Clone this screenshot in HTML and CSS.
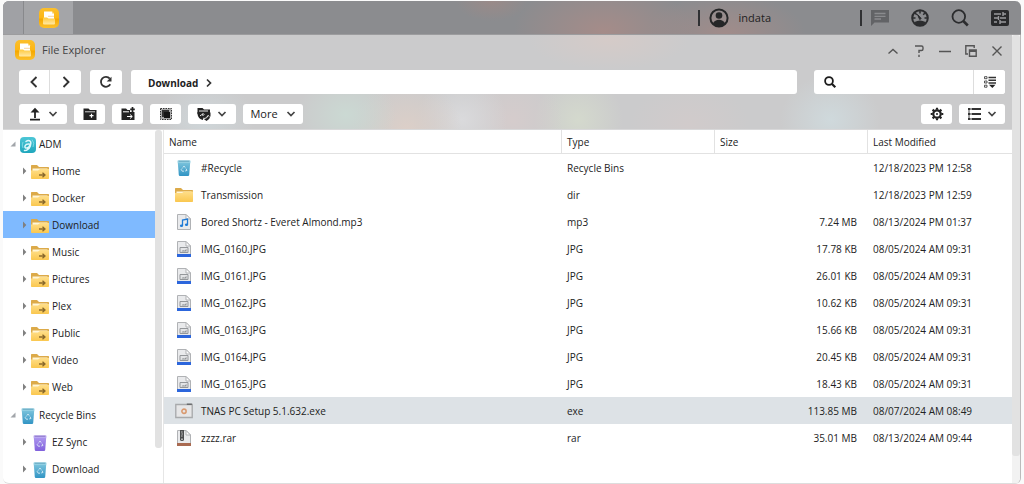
FILE: index.html
```html
<!DOCTYPE html>
<html lang="en">
<head>
<meta charset="utf-8">
<title>File Explorer</title>
<link rel="stylesheet" href="styles.css">
</head>
<body>
<svg class="sprite" aria-hidden="true">
  <defs>
    <linearGradient id="gYellow" x1="0" y1="0" x2="0" y2="1"><stop offset="0" stop-color="#fbbf2c"/><stop offset=".5" stop-color="#fdb614"/><stop offset=".55" stop-color="#f5a800"/><stop offset="1" stop-color="#fcc12e"/></linearGradient>
    <linearGradient id="gTray" x1="0" y1="0" x2="0" y2="1"><stop offset="0" stop-color="#ffc93c"/><stop offset="1" stop-color="#ffe9a6"/></linearGradient>
    <linearGradient id="gFolder" x1="0" y1="0" x2="0" y2="1"><stop offset="0" stop-color="#ffdf8a"/><stop offset="1" stop-color="#fac74f"/></linearGradient>
    <linearGradient id="gBlue" x1="0" y1="0" x2="0" y2="1"><stop offset="0" stop-color="#7fc6dd"/><stop offset="1" stop-color="#3194c4"/></linearGradient>
    <linearGradient id="gPurple" x1="0" y1="0" x2="0" y2="1"><stop offset="0" stop-color="#b09af0"/><stop offset="1" stop-color="#8060dc"/></linearGradient>
    <linearGradient id="gAdm" x1="0" y1="0" x2="0" y2="1"><stop offset="0" stop-color="#4cc6d6"/><stop offset="1" stop-color="#1fa6bc"/></linearGradient>
  </defs>
  <symbol id="app" viewBox="0 0 20 20">
    <rect width="20" height="20" rx="5" fill="url(#gYellow)"/>
    <path d="M5 3.500h8l2 2V12H5z" fill="#fff"/><path d="M13 3.500v2h2z" fill="#f8d47b"/>
    <path d="M4 9.500h4l1.500 1h6.500v5a1 1 0 0 1-1 1H5a1 1 0 0 1-1-1z" fill="url(#gTray)"/><path d="M9 8.300h6" stroke="#f3c98a" stroke-width=".8" fill="none"/>
  </symbol>
  <symbol id="share" viewBox="0 0 18 16">
    <path d="M0 1.500Q0 1 .7 1H6l2 2h9.300q.7 0 .7.700V8H0z" fill="#dcaa49"/>
    <path d="M1.500 4.500h15V8h-15z" fill="#fff6d8"/>
    <path d="M0 6.500h7l2-1.500h9v9.300q0 .7-.7.700H.7Q0 15 0 14.300z" fill="url(#gFolder)"/>
    <path d="M8 11h5.500M11.500 8.700l2.500 2.300-2.500 2.300" fill="none" stroke="#8a6a2c" stroke-width="1.300"/>
  </symbol>
  <symbol id="folder" viewBox="0 0 18 16">
    <path d="M0 1.500Q0 1 .7 1H6l2 2h9.300q.7 0 .7.700V8H0z" fill="#dcaa49"/>
    <path d="M1.500 4.500h15V8h-15z" fill="#fff6d8"/>
    <path d="M0 6h7l2-1.500h9v9.800q0 .7-.7.700H.7Q0 15 0 14.300z" fill="url(#gFolder)"/>
  </symbol>
  <symbol id="adm" viewBox="0 0 16 16">
    <rect width="16" height="16" rx="4" fill="url(#gAdm)"/>
    <path d="M6 4.500Q8.500 2.500 10.500 4.500Q11.500 6 10.300 9Q9.500 12 6.500 13.200L4.500 13.500M10 7.200Q6 6.700 5 9Q4.500 11.500 7 11Q9 10.500 10 8" fill="none" stroke="#dff8fb" stroke-width="1.500" stroke-linecap="round"/>
    <path d="M12 2.500Q15 6 13 10M3 5Q1.500 8 3 11" stroke="#8be0ea" fill="none" stroke-width=".8"/>
  </symbol>
  <symbol id="loop" viewBox="0 0 8 8">
    <path d="M2.800 2.600 4 1l1.200 1.600M6 3.600l1 1.800-1.800.6M4 6.200H2.200L1.200 4.400l1-1" fill="none" stroke="#e4f4fa" stroke-width=".8"/>
  </symbol>
  <symbol id="bin" viewBox="0 0 14 16">
    <path d="M.7 1.500h12.600L12.200 15q-.1 1-1.200 1H3q-1.100 0-1.200-1z" fill="url(#gBlue)"/>
    <path d="M.5 1Q.5.300 1.200.300h11.600q.7 0 .7.700v1.500H.5z" fill="#a9dbea"/><path d="M1.500 1.200h11" stroke="#4793af" stroke-width=".8"/>
    <use href="#loop" x="3" y="5" width="8" height="8"/>
  </symbol>
  <symbol id="binp" viewBox="0 0 14 16">
    <path d="M.7 1.500h12.600L12.200 15q-.1 1-1.200 1H3q-1.100 0-1.200-1z" fill="url(#gPurple)"/>
    <path d="M.5 1Q.5.300 1.200.300h11.600q.7 0 .7.700v1.500H.5z" fill="#c9bbf5"/><path d="M1.500 1.200h11" stroke="#7258b8" stroke-width=".8"/>
    <use href="#loop" x="3" y="5" width="8" height="8"/>
  </symbol>
  <symbol id="page" viewBox="0 0 14 16">
    <path d="M.5.500h8.500l4.500 4.500v10.500H.5z" fill="#e9eaec" stroke="#b0b2b5"/><path d="M9 .5V5h4.500z" fill="#fff" stroke="#b0b2b5"/>
  </symbol>
  <symbol id="mp3" viewBox="0 0 14 16"><use href="#page"/>
    <path d="M5.500 11.500V6l5-1v5.500" fill="none" stroke="#1e7ad6" stroke-width="1.300"/><ellipse cx="4.500" cy="11.700" rx="1.600" ry="1.300" fill="#1e7ad6"/><ellipse cx="9.500" cy="10.700" rx="1.600" ry="1.300" fill="#1e7ad6"/>
  </symbol>
  <symbol id="jpg" viewBox="0 0 14 16"><use href="#page"/>
    <path d="M3 6.500h8v5H3z" fill="#e3e4e6" stroke="#94979a"/><path d="m4.500 10.500 1.500-1.500 1.200.7L9.500 8v2.500z" fill="#94979a"/>
    <path d="M0 13h14v3H0z" fill="#2c66dc"/>
  </symbol>
  <symbol id="rar" viewBox="0 0 14 16"><use href="#page"/>
    <path d="M3 0h4v9.500q0 1.500-2 1.500t-2-1.500z" fill="#4b4c4e"/><path d="M5 1v6M4 2h1M5 4h1M4 6h1" stroke="#aaa" stroke-width=".8"/><path d="M4.300 8.500h1.400v1.500H4.300z" fill="#ddd"/>
    <path d="M0 13h14v3H0z" fill="#a96a51"/>
  </symbol>
  <symbol id="exe" viewBox="0 0 16 14">
    <path d="M.7 1.200h14.600v11.600H.7z" fill="#e6e6e7" stroke="#a8aaac" stroke-width="1.200"/><path d="M10.500 1H15" stroke="#6a6c6e" stroke-width="1.200"/>
    <circle cx="8" cy="7.200" r="1.900" fill="none" stroke="#d99a70" stroke-width="1.400"/>
  </symbol>
  <symbol id="down" viewBox="0 0 10 8"><path d="m1.500 2 3.500 3.500L8.500 2" fill="none" stroke="#444" stroke-width="1.700"/></symbol>
  <symbol id="closed" viewBox="0 0 5 8"><path d="M1 .5 4.300 4 1 7.500z" fill="#808080"/></symbol>
  <symbol id="open" viewBox="0 0 6 6"><path d="M5.500.500v5h-5z" fill="#a2a5aa"/></symbol>
  <symbol id="gearteeth" viewBox="0 0 14 14">
    <circle cx="7" cy="7" r="3.700" fill="none" stroke="#222" stroke-width="2.200"/>
    <path d="M7 .7v2M7 11.300v2M.7 7h2M11.300 7h2M2.600 2.600 4 4M10 10l1.400 1.400M2.600 11.400 4 10M10 4l1.400-1.400" stroke="#222" stroke-width="2.200"/><circle cx="7" cy="7" r="1" fill="#222"/>
  </symbol>
</svg>

<div class="desktop">
  <header class="topbar">
    <div class="edge"></div>
    <button class="task" aria-label="File Explorer"><svg class="i20"><use href="#app"/></svg></button>
    <div class="status">
      <button class="user">
        <svg class="i20" viewBox="0 0 20 20"><circle cx="10" cy="10" r="8.600" fill="none" stroke="#252627" stroke-width="2"/><circle cx="10" cy="7.500" r="3.300" fill="#252627"/><path d="M3.800 15.500Q6 11.800 10 11.800t6.200 3.700Q13.500 18.500 10 18.500t-6.200-3z" fill="#252627"/></svg>
        <span>indata</span>
      </button>
      <div class="tools">
        <button aria-label="Messages"><svg class="i18" viewBox="0 0 18 18"><path d="M0 1h18v12.500H3.500L0 17z" fill="#626366"/><path d="M3.500 4.500h11M3.500 7.300h11M3.500 10h6.500" stroke="#8a8b8e" stroke-width="1.300"/></svg></button>
        <button aria-label="Activity"><svg class="i18" viewBox="0 0 18 18"><circle cx="9" cy="9" r="7.800" fill="none" stroke="#2b2c2e" stroke-width="2"/><path d="M3.500 13q5.500-3 11 0-2 4-5.500 4t-5.500-4z" fill="#2b2c2e"/><path d="M9 2v2.500M2 9h2.500M13.500 9H16M4 4l1.800 1.800M14 4l-1.800 1.800" stroke="#2b2c2e" stroke-width="1.500"/><path d="m6.500 5.500 3.700 4-1.500 1z" fill="#2b2c2e" stroke="#2b2c2e"/></svg></button>
        <button aria-label="Search"><svg class="i18" viewBox="0 0 18 18"><circle cx="7.800" cy="7.500" r="6.300" fill="none" stroke="#2b2c2e" stroke-width="1.800"/><path d="m12.300 12 4.500 4.500" stroke="#2b2c2e" stroke-width="2.600"/></svg></button>
        <button aria-label="Dashboard"><svg class="i18" viewBox="0 0 18 18"><rect y="1" width="18" height="16" rx="2" fill="#292a2c"/><path d="M3 5h7M12.500 5H15M3 9h4M9 9h6M3 13h3M8.500 13H15M12 3v4M7.500 7v4M9 11v4" stroke="#999a9d" stroke-width="1.400"/></svg></button>
      </div>
    </div>
  </header>

  <main class="window">
    <div class="content">
      <div class="chrome">
        <div class="titlebar">
          <svg class="i20"><use href="#app"/></svg>
          <h1>File Explorer</h1>
          <div class="winctl">
            <button aria-label="Collapse"><svg viewBox="0 0 12 12"><path d="m1.500 8.500 4.500-4 4.500 4"/></svg></button>
            <button aria-label="Help"><svg viewBox="0 0 12 12"><path d="M2 1h6.500q1.500 0 1.500 1.500v1.500q0 1.500-1.500 1.500H6V8M6 9.700V12"/></svg></button>
            <button aria-label="Minimize"><svg viewBox="0 0 12 12"><path d="M0 6.500h12"/></svg></button>
            <button aria-label="Restore"><svg viewBox="0 0 12 12"><path d="M3 9H.8V.8h8.400V3M4.500 5h6.700v6.200H4.500zM4.500 6.200h6.700"/></svg></button>
            <button aria-label="Close"><svg viewBox="0 0 12 12"><path d="m1.500 1.500 9 9M10.500 1.500l-9 9"/></svg></button>
          </div>
        </div>
        <div class="navrow">
          <div class="pair">
            <button class="btn" aria-label="Back"><svg class="i12" viewBox="0 0 12 12"><path d="M8.500 1 3.500 6l5 5" fill="none" stroke="#333" stroke-width="1.900"/></svg></button>
            <button class="btn" aria-label="Forward"><svg class="i12" viewBox="0 0 12 12"><path d="m3.500 1 5 5-5 5" fill="none" stroke="#333" stroke-width="1.900"/></svg></button>
          </div>
          <button class="btn refresh" aria-label="Refresh"><svg class="i12" viewBox="0 0 12 12"><path d="M10.300 8.300A5 5 0 1 1 9.800 2.600" fill="none" stroke="#333" stroke-width="1.800"/><path d="M11.500.700v4.800H6.700z" fill="#333"/></svg></button>
          <nav class="path" aria-label="Path"><a href="#">Download</a><svg viewBox="0 0 6 8"><path d="m1 .5 3.500 3.500L1 7.500" fill="none" stroke="#333" stroke-width="1.700"/></svg></nav>
          <form class="search">
            <label for="q" aria-label="Search files"><svg class="i12" viewBox="0 0 12 12"><circle cx="5" cy="5" r="3.900" fill="none" stroke="#1c1c1c" stroke-width="1.800"/><path d="m8 8 3.300 3.300" stroke="#1c1c1c" stroke-width="2.200"/></svg></label>
            <input id="q" type="text">
            <button type="button" class="btn" aria-label="Advanced search"><svg class="i12" viewBox="0 0 12 12"><path d="M.5.700H3v2H.5zM.5 5H3v2H.5zM.5 9.200H3v2H.5z" fill="none" stroke="#444" stroke-width=".9"/><path d="M4.500 1.500H12M4.500 4.200H12M4.500 6.900H12" stroke="#333" stroke-width="1.500"/><path d="M5 8.700h6.500l-3.200 3.300z" fill="#222"/></svg></button>
          </form>
        </div>
        <div class="toolrow">
          <button class="btn wide" aria-label="Upload"><svg class="i14" viewBox="0 0 14 14"><path d="M7 11V3M2 12.700h10" stroke="#222" stroke-width="1.800"/><path d="M2.500 5.500 7 .8l4.500 4.700z" fill="#222"/></svg><svg class="chev"><use href="#down"/></svg></button>
          <button class="btn" aria-label="New folder"><svg class="i14" viewBox="0 0 14 14"><path d="M.5 1.500h5L7 3h6.500v10H.5z" fill="#222"/><path d="M2 4.800h10" stroke="#fff" stroke-width=".8"/><path d="M8.500 6.700v4M6.500 8.700h4" stroke="#fff" stroke-width="1.200"/></svg></button>
          <button class="btn" aria-label="Create shared folder"><svg class="i14" viewBox="0 0 14 14"><path d="M.5 1.500h4.500L6.500 3H9v2h4.500v8H.5z" fill="#222"/><path d="M11.500 0v5M9.200 2.300h4.600" stroke="#222" stroke-width="1.700"/><path d="M2 4.800h6M6 9.500h5M9 7.500l2.300 2L9 11.500" stroke="#fff" fill="none"/></svg></button>
          <button class="btn" aria-label="Select all"><svg class="i14" viewBox="0 0 14 14"><path d="M1.500 1.500h11v11h-11z" fill="#aaa" stroke="#333" stroke-dasharray="1.500 1"/><path d="M3 3h7v7H3z" fill="#333"/><path d="M5 5h6v6H5z" fill="#171717"/></svg></button>
          <button class="btn wide" aria-label="Remote mount"><svg class="i14" viewBox="0 0 14 14"><path d="M.5 1h5L7 2.500h6V7H.5z" fill="#222"/><path d="M.5 5H6v8Q1 12 .5 7zM5.500 5.500H13.500v3.500q-.5 3-4 5-3.500-2-4-5z" fill="#222"/><path d="M2 4h9M3 9q1-1.500 3-1.500M7 11.500q3 0 4-2.500M5.500 6l1.500 1.500L5.500 9M10 9.500l1.200-1.200 1 1.200" stroke="#fff" fill="none" stroke-width=".9"/></svg><svg class="chev"><use href="#down"/></svg></button>
          <button class="btn more">More<svg class="chev"><use href="#down"/></svg></button>
          <button class="btn settings" aria-label="Settings"><svg class="i14"><use href="#gearteeth"/></svg></button>
          <button class="btn wide view" aria-label="View mode"><svg class="i14" viewBox="0 0 14 14"><path d="M1 2h2.500M1 7h2.500M1 12h2.500" stroke="#222" stroke-width="2"/><path d="M4.500 2H14M4.500 7H14M4.500 12H14" stroke="#333" stroke-width="1.800"/><path d="M2 1v12" stroke="#444"/></svg><svg class="chev"><use href="#down"/></svg></button>
        </div>
      </div>

      <div class="body">
        <aside class="side">
          <ul class="tree">
            <li><button aria-label="Collapse ADM"><svg class="open"><use href="#open"/></svg></button><svg class="i16"><use href="#adm"/></svg><a href="#">ADM</a></li>
            <li class="sub"><button aria-label="Expand Home"><svg class="closed"><use href="#closed"/></svg></button><svg class="fold"><use href="#share"/></svg><a href="#">Home</a></li>
            <li class="sub"><button aria-label="Expand Docker"><svg class="closed"><use href="#closed"/></svg></button><svg class="fold"><use href="#share"/></svg><a href="#">Docker</a></li>
            <li class="sub current"><button aria-label="Expand Download"><svg class="closed"><use href="#closed"/></svg></button><svg class="fold"><use href="#share"/></svg><a href="#">Download</a></li>
            <li class="sub"><button aria-label="Expand Music"><svg class="closed"><use href="#closed"/></svg></button><svg class="fold"><use href="#share"/></svg><a href="#">Music</a></li>
            <li class="sub"><button aria-label="Expand Pictures"><svg class="closed"><use href="#closed"/></svg></button><svg class="fold"><use href="#share"/></svg><a href="#">Pictures</a></li>
            <li class="sub"><button aria-label="Expand Plex"><svg class="closed"><use href="#closed"/></svg></button><svg class="fold"><use href="#share"/></svg><a href="#">Plex</a></li>
            <li class="sub"><button aria-label="Expand Public"><svg class="closed"><use href="#closed"/></svg></button><svg class="fold"><use href="#share"/></svg><a href="#">Public</a></li>
            <li class="sub"><button aria-label="Expand Video"><svg class="closed"><use href="#closed"/></svg></button><svg class="fold"><use href="#share"/></svg><a href="#">Video</a></li>
            <li class="sub"><button aria-label="Expand Web"><svg class="closed"><use href="#closed"/></svg></button><svg class="fold"><use href="#share"/></svg><a href="#">Web</a></li>
          </ul>
          <ul class="tree">
            <li><button aria-label="Collapse Recycle Bins"><svg class="open"><use href="#open"/></svg></button><svg class="i16"><use href="#bin"/></svg><a href="#">Recycle Bins</a></li>
            <li class="sub"><button aria-label="Expand EZ Sync"><svg class="closed"><use href="#closed"/></svg></button><svg class="fold"><use href="#binp"/></svg><a href="#">EZ Sync</a></li>
            <li class="sub"><button aria-label="Expand Download bin"><svg class="closed"><use href="#closed"/></svg></button><svg class="fold"><use href="#bin"/></svg><a href="#">Download</a></li>
          </ul>
        </aside>
        <div class="track"><div class="thumb"></div></div>
        <div class="files">
          <table>
            <colgroup><col><col class="mid"><col class="mid"><col class="date"></colgroup>
            <thead><tr><th>Name</th><th>Type</th><th>Size</th><th>Last Modified</th></tr></thead>
            <tbody>
              <tr><td><div class="name"><svg><use href="#bin"/></svg>#Recycle</div></td><td>Recycle Bins</td><td></td><td>12/18/2023 PM 12:58</td></tr>
              <tr><td><div class="name"><svg><use href="#folder"/></svg>Transmission</div></td><td>dir</td><td></td><td>12/18/2023 PM 12:59</td></tr>
              <tr><td><div class="name"><svg><use href="#mp3"/></svg>Bored Shortz - Everet Almond.mp3</div></td><td>mp3</td><td>7.24 MB</td><td>08/13/2024 PM 01:37</td></tr>
              <tr><td><div class="name"><svg><use href="#jpg"/></svg>IMG_0160.JPG</div></td><td>JPG</td><td>17.78 KB</td><td>08/05/2024 AM 09:31</td></tr>
              <tr><td><div class="name"><svg><use href="#jpg"/></svg>IMG_0161.JPG</div></td><td>JPG</td><td>26.01 KB</td><td>08/05/2024 AM 09:31</td></tr>
              <tr><td><div class="name"><svg><use href="#jpg"/></svg>IMG_0162.JPG</div></td><td>JPG</td><td>10.62 KB</td><td>08/05/2024 AM 09:31</td></tr>
              <tr><td><div class="name"><svg><use href="#jpg"/></svg>IMG_0163.JPG</div></td><td>JPG</td><td>15.66 KB</td><td>08/05/2024 AM 09:31</td></tr>
              <tr><td><div class="name"><svg><use href="#jpg"/></svg>IMG_0164.JPG</div></td><td>JPG</td><td>20.45 KB</td><td>08/05/2024 AM 09:31</td></tr>
              <tr><td><div class="name"><svg><use href="#jpg"/></svg>IMG_0165.JPG</div></td><td>JPG</td><td>18.43 KB</td><td>08/05/2024 AM 09:31</td></tr>
              <tr class="picked"><td><div class="name"><svg><use href="#exe"/></svg>TNAS PC Setup 5.1.632.exe</div></td><td>exe</td><td>113.85 MB</td><td>08/07/2024 AM 08:49</td></tr>
              <tr><td><div class="name"><svg><use href="#rar"/></svg>zzzz.rar</div></td><td>rar</td><td>35.01 MB</td><td>08/13/2024 AM 09:44</td></tr>
            </tbody>
          </table>
        </div>
      </div>
    </div>
    <div class="track page"><div class="thumb"></div></div>
  </main>
</div>
</body>
</html>
```
FILE: styles.css
```css
* { box-sizing: border-box; }
body {
  margin: 0;
  background: #fafafa;
  font: 10px/16px "Open Sans", "Noto Sans", sans-serif;
  color: #222;
}
button, input { font: inherit; color: inherit; border: 0; padding: 0; background: none; }
button { display: flex; align-items: center; justify-content: center; }
a { color: inherit; text-decoration: none; }
svg { display: block; flex: none; overflow: visible; }
.sprite { position: absolute; width: 0; height: 0; }
.i20 { width: 20px; height: 20px; }
.i18 { width: 18px; height: 18px; }
.i16 { width: 16px; height: 16px; }
.i14 { width: 14px; height: 14px; }
.i12 { width: 12px; height: 12px; }

.desktop {
  display: flex;
  flex-direction: column;
  height: 100vh;
  padding: 1px 3px 0;
}

/* system bar */
.topbar {
  display: flex;
  flex: none;
  height: 34px;
  border-radius: 6px 6px 0 0;
  border-bottom: 1px solid #9c9c9e;
  background:
    radial-gradient(ellipse 36px 20px at 48% 0, #9a8a88, transparent),
    radial-gradient(ellipse 90px 50px at 59% 90%, #a58c89, transparent),
    radial-gradient(ellipse 80px 40px at 71% 100%, #a18c8a, transparent),
    #8b8c8f;
}
.edge { width: 21px; background: #a0a1a5; border-right: 1px solid #88898c; border-radius: 6px 0 0 0; }
.task { width: 49px; background: #a4a5a8; }
.status { display: flex; align-items: center; margin-left: auto; }
.user { gap: 10px; padding-left: 9px; border-left: 2px solid #303133; height: 16px; font-size: 11px; }
.tools { display: flex; gap: 22px; height: 16px; margin-left: 89px; padding: 0 12px 0 9px; border-left: 2px solid #303133; }

/* window */
.window {
  display: flex;
  flex: 1;
  min-height: 0;
  background: #fff;
  border-radius: 0 0 6px 6px;
  border-right: 1px solid #bbb;
  border-bottom: 1px solid #ddd;
  overflow: hidden;
}
.content { display: flex; flex-direction: column; flex: 1; min-width: 0; }
.chrome {
  padding: 5px 7px 5px 16px;
  border-bottom: 1px solid #d8d8d9;
  background:
    radial-gradient(ellipse 50px 40px at 20% 90%, #cfd6d9, transparent),
    radial-gradient(ellipse 50px 40px at 34% 85%, #cbd9d3, transparent),
    radial-gradient(ellipse 55px 50px at 40% 100%, #dccfc8, transparent),
    radial-gradient(ellipse 45px 45px at 45.500% 90%, #dadadc, transparent),
    radial-gradient(ellipse 50px 50px at 50.500% 90%, #d5cccc, transparent),
    radial-gradient(ellipse 45px 45px at 57% 90%, #d4d9cd, transparent),
    radial-gradient(ellipse 60px 40px at 68% 95%, #d1cbcb, transparent),
    radial-gradient(ellipse 50px 45px at 82% 90%, #cfd9dc, transparent),
    radial-gradient(ellipse 80px 30px at 60% 5%, #d5cbc8, transparent),
    #cbcbcc;
}
.titlebar { display: flex; align-items: center; height: 20px; margin-left: -4px; gap: 7px; }
.titlebar h1 { margin: 0; font-size: 11px; font-weight: 400; color: #444; }
.winctl { display: flex; gap: 14px; margin: 2px 2px 0 auto; }
.winctl svg { width: 12px; height: 12px; fill: none; stroke: #555; stroke-width: 1.4; }
.btn { height: 24px; width: 32px; flex: none; border-radius: 3px; background: #fff; }
.navrow { display: flex; margin-top: 10px; gap: 9px; }
.pair { display: flex; }
.pair .btn { width: 31px; }
.pair .btn:first-child { border-radius: 3px 0 0 3px; border-right: 1px solid #ddd; }
.pair .btn:last-child { border-radius: 0 3px 3px 0; }
.path { display: flex; flex: 1; align-items: center; gap: 8px; padding: 2px 17px 0; border-radius: 3px; background: #fff; font-weight: 700; }
.path svg { width: 6px; height: 8px; }
.search { display: flex; width: 191px; margin-left: 8px; border-radius: 3px; background: #fff; }
.search label { display: flex; align-items: center; padding-left: 10px; }
.search input { flex: 1; min-width: 0; padding: 0 6px; outline: 0; }
.search .btn { border-left: 1px solid #ddd; border-radius: 0 3px 3px 0; }
.toolrow { display: flex; gap: 7px; margin-top: 10px; }
.toolrow .btn { width: 31px; height: 20px; }
.toolrow .wide { width: 48px; gap: 6px; }
.toolrow .view { width: 46px; }
.toolrow .more { width: 60px; gap: 8px; font-size: 11px; }
.toolrow .settings { margin-left: auto; }
.chev { width: 10px; height: 8px; }

/* folder tree */
.body { display: flex; flex: 1; min-height: 0; }
.side { width: 152px; overflow: hidden; }
.tree { margin: 0; padding: 0; list-style: none; }
.tree + .tree { padding-top: 1px; }
.tree li { display: flex; align-items: center; height: 27px; padding-left: 6px; }
.tree button { width: 8px; height: 16px; margin-right: 3px; }
.tree .sub { padding-left: 17px; }
.tree a { margin-left: 3px; }
.tree .current { background: #7fbaff; }
.open { width: 6px; height: 6px; }
.closed { width: 5px; height: 8px; }
.fold { width: 18px; height: 16px; }
.tree .fold, .tree .i16 { margin-top: 2px; }
.track { flex: none; width: 9px; border-right: 1px solid #e6e6e6; }
.thumb { width: 7px; height: 90%; border-radius: 3px; background: #e2e2e2; }
.track.page { width: 8px; border: 0; background: #f2f2f2; }
.track.page .thumb { width: 8px; height: 94%; }

/* file list */
.files { flex: 1; min-width: 0; }
table { width: 100%; table-layout: fixed; border-collapse: separate; border-spacing: 0; }
.mid { width: 153px; }
.date { width: 145px; }
th { height: 24px; padding: 0 5px; text-align: left; font-weight: 400; border-bottom: 1px solid #e2e2e2; }
th + th { border-left: 1px solid #e2e2e2; }
td { height: 27px; padding: 0 5px 0 6px; white-space: nowrap; }
td:nth-child(3) { padding-right: 10px; text-align: right; }
.name { display: flex; align-items: center; gap: 8px; padding-left: 5px; }
.name svg { width: 18px; height: 16px; }
.picked td { background: #dde2e6; }
```
